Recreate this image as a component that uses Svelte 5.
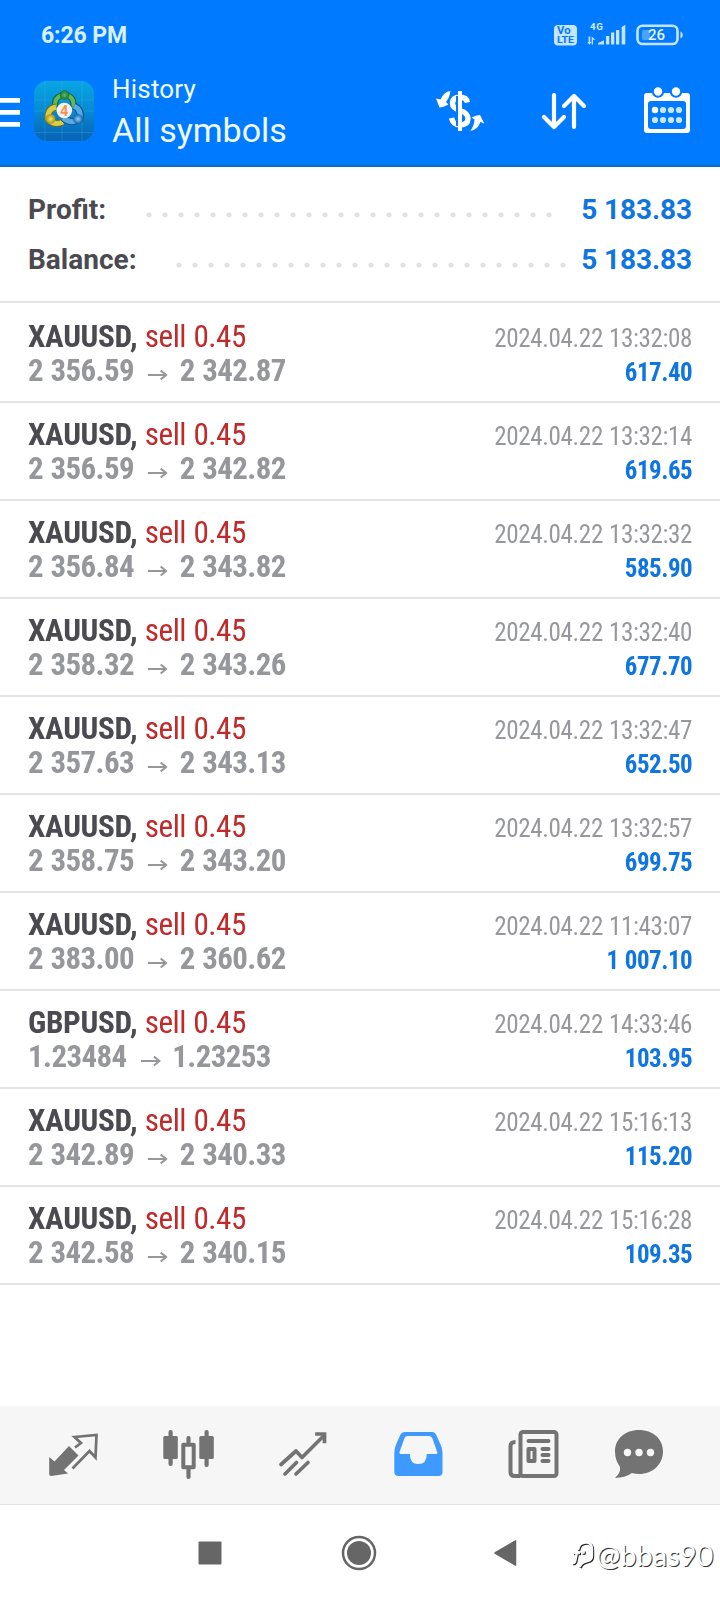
<script>
  const deals = [
    ['XAUUSD', '2 356.59', '2 342.87', '2024.04.22 13:32:08', '617.40'],
    ['XAUUSD', '2 356.59', '2 342.82', '2024.04.22 13:32:14', '619.65'],
    ['XAUUSD', '2 356.84', '2 343.82', '2024.04.22 13:32:32', '585.90'],
    ['XAUUSD', '2 358.32', '2 343.26', '2024.04.22 13:32:40', '677.70'],
    ['XAUUSD', '2 357.63', '2 343.13', '2024.04.22 13:32:47', '652.50'],
    ['XAUUSD', '2 358.75', '2 343.20', '2024.04.22 13:32:57', '699.75'],
    ['XAUUSD', '2 383.00', '2 360.62', '2024.04.22 11:43:07', '1 007.10'],
    ['GBPUSD', '1.23484', '1.23253', '2024.04.22 14:33:46', '103.95'],
    ['XAUUSD', '2 342.89', '2 340.33', '2024.04.22 15:16:13', '115.20'],
    ['XAUUSD', '2 342.58', '2 340.15', '2024.04.22 15:16:28', '109.35']
  ];
</script>

<div class="screen">
  <header>
    <div class="status">
      <span class="time">6:26 PM</span>
      <svg class="sys" width="136" height="30" viewBox="550 20 136 30">
        <rect x="554" y="25" width="23" height="20.500" rx="4" fill="#c4e4ff" />
        <text x="557" y="34" font-size="10" font-weight="700" fill="#007aff" textLength="13.500" lengthAdjust="spacingAndGlyphs">Vo</text>
        <text x="557" y="43.300" font-size="9.500" font-weight="700" fill="#007aff" textLength="17" lengthAdjust="spacingAndGlyphs">LTE</text>
        <text x="590" y="30" font-size="9.800" font-weight="700" fill="#d5edff" textLength="13">4G</text>
        <g fill="#c4e4ff">
          <path d="M588.600 36.500h1.600v5.500h1.400l-2.200 2.800-2.200-2.800h1.400zM593 44.500h-1.300v-8l3.800 3.200h-2.500z" />
          <path d="M598 44.500v-1.500l6-2.800v4.300zM606 36h3.300v8.500H606zM611 32.500h3.300v12H611zM616 30h3.300v14.500H616zM621.700 27l3.600-2.200v19.700H621.700z" />
          <path d="M680.500 31.500q2.300.5 2.300 3.500t-2.300 3.500z" />
        </g>
        <rect x="637.500" y="25.700" width="40" height="18.300" rx="5" fill="none" stroke="#c4e4ff" stroke-width="2.600" />
        <rect x="642" y="30" width="8" height="10" rx="1.500" fill="#4ba3ff" />
        <text x="648" y="40.200" font-size="15" font-weight="500" fill="#e6f5ff" textLength="17">26</text>
      </svg>
    </div>
    <div class="bar">
      <svg width="20" height="30" viewBox="0 97 20 30"><path d="M0 98h20v4.700H0zM0 110h20v4.700H0zM0 122h20v4.700H0z" fill="#fff" /></svg>
      <svg class="logo" width="62" height="62" viewBox="33 80 62 62">
        <defs>
          <linearGradient id="bg" x1="0" y1="0" x2="0" y2="1"><stop offset="0" stop-color="#08a6e4" /><stop offset=".5" stop-color="#0789d2" /><stop offset="1" stop-color="#0862b4" /></linearGradient>
          <radialGradient id="gr"><stop offset="0" stop-color="#57c05a" /><stop offset="1" stop-color="#16703a" /></radialGradient>
          <radialGradient id="ye"><stop offset="0" stop-color="#f6e46a" /><stop offset="1" stop-color="#a89414" /></radialGradient>
          <radialGradient id="bl"><stop offset="0" stop-color="#8fd2fa" /><stop offset="1" stop-color="#1467ab" /></radialGradient>
        </defs>
        <rect x="34" y="81" width="60" height="60" rx="13" fill="url(#bg)" />
        <path d="M34 100h60M34 111h60M34 132.500h60M45 81v60M62 81v60M82 81v60" stroke="#4fc0ee" stroke-opacity=".3" stroke-width=".8" />
        <g fill="none">
          <path d="M55 107q-1-11 9.500-12 10 1 9 12" stroke="#12632f" stroke-width="6" />
          <path d="M55 107q-1-11 9.500-12 10 1 9 12" stroke="#62b65c" stroke-width="4" />
          <path d="M56 107q-9 2-8 12 6 7 15 3" stroke="#6e6b12" stroke-width="7" />
          <path d="M56 107q-9 2-8 12 6 7 15 3" stroke="#d8cd48" stroke-width="5" />
          <path d="M74 106q8 4 6 13-8 6-17-1" stroke="#0c5291" stroke-width="7" />
          <path d="M74 106q8 4 6 13-8 6-17-1" stroke="#58a9df" stroke-width="5" />
        </g>
        <circle cx="64.500" cy="95" r="4.800" fill="url(#gr)" /><circle cx="50.500" cy="119" r="4.800" fill="url(#ye)" /><circle cx="78" cy="119" r="4.800" fill="url(#bl)" />
        <circle cx="64.300" cy="110.500" r="7.800" fill="#f6f4f0" />
        <text x="60" y="115.700" font-size="14.500" font-weight="700" fill="#f2945a">4</text>
      </svg>
      <div class="titles"><div class="sub">History</div><div class="main">All symbols</div></div>
      <svg class="actions" width="270" height="60" viewBox="430 80 270 60" fill="none" stroke="#fff">
        <path d="M467.500 102.500q-1-5.300-7.500-5.300-7.500 0-7.500 6.300 0 4.500 7.500 7 8 2.500 8 8 0 6.500-8 6.500-7 0-8.500-7" stroke-width="5.400" />
        <path d="M457 96v30" stroke="#007aff" stroke-width="2" />
        <path d="M460 91v40" stroke-width="4" />
        <path d="M450.300 91Q444 91.500 440.500 99.500L436 98.500 439.500 107.500Q444 107 448.500 104.500L446 102Q450 97 450.300 91zM470.300 131Q477.500 130 480.500 122L484.300 123.500 480 115Q476 115 471.500 117.500L474.500 119.500Q474 126 470.300 131z" fill="#fff" stroke="none" />
        <path d="M554 95v31M544 117l10 10 10-10M574 127V96M564 106l10-10 10 10" stroke-width="4.200" stroke-linecap="round" stroke-linejoin="round" />
        <rect x="644" y="93" width="46" height="40" rx="3" fill="#fff" stroke="none" />
        <rect x="648" y="101" width="38" height="28" rx="3" fill="#007aff" stroke="none" />
        <g fill="#fff" stroke="#007aff" stroke-width="2"><circle cx="658" cy="91.500" r="5.200" /><circle cx="676" cy="91.500" r="5.200" /></g>
        <g fill="#c9e6ff" stroke="none"><circle cx="655" cy="110" r="3.200" fill="#fff" /><circle cx="663" cy="110" r="3.100" /><circle cx="671" cy="110" r="3.100" /><circle cx="679" cy="110" r="3.100" /><circle cx="655" cy="120" r="3.100" /><circle cx="663" cy="120" r="3.100" /><circle cx="671" cy="120" r="3.100" /><circle cx="679" cy="120" r="3.100" /></g>
      </svg>
    </div>
  </header>

  <section class="summary">
    <div class="sum"><span class="label short">Profit:</span><i class="dots d26"></i><b>5 183.83</b></div>
    <div class="sum"><span class="label">Balance:</span><i class="dots d25"></i><b>5 183.83</b></div>
  </section>

  <main>
    {#each deals as [symbol, from, to, time, profit]}
      <article>
        <div class="line"><div class="sym"><strong>{symbol},</strong> <span class="sell">sell 0.45</span></div><time>{time}</time></div>
        <div class="line"><div class="price"><span>{from}</span><svg width="21" height="14" viewBox="0 0 21 14"><path d="M0 7h19M13.500 2.500 19 7l-5.500 4.500" fill="none" stroke="#96979b" stroke-width="2.200" /></svg><span>{to}</span></div><div class="profit">{profit}</div></div>
      </article>
    {/each}
  </main>

  <footer class="tabs">
    <svg viewBox="42 1425 64 60"><path d="M49.200 1457l5.300 4.500L69 1446l9.500 9.500-14.500 14.500 4 3.500-17 2.500q-1.800 0-1.800-1.800z" fill="#737373" /><path d="M75 1447.500l6-4.500-6.500-6 22-2-1 22.500-6-6.500-17 17.500" fill="none" stroke="#737373" stroke-width="2.700" /></svg>
    <svg viewBox="157 1425 64 60" fill="#737373"><rect x="168.500" y="1430" width="4.200" height="36" rx="2" /><rect x="163.300" y="1436" width="14.500" height="23" rx="1.500" /><rect x="204.500" y="1430" width="4.200" height="37" rx="2" /><rect x="199.300" y="1436" width="14.500" height="23" rx="1.500" /><rect x="186.400" y="1436" width="4.200" height="8" rx="2" /><rect x="186.400" y="1467" width="4.200" height="12" rx="2" /><rect x="183.300" y="1444.800" width="10.400" height="22.500" fill="#f6f6f6" stroke="#737373" stroke-width="4" stroke-linejoin="round" /></svg>
    <svg viewBox="272 1425 64 60" fill="none" stroke="#737373" stroke-width="3.700" stroke-linecap="round" stroke-linejoin="round"><path d="M281 1464.500l15-13.500 6 6.500 22-22M285 1474l11.500-11.500M296 1474l12-11.500" /><path d="M317 1434h7.500v7.500" stroke-linecap="square" stroke-linejoin="miter" stroke-width="3.700" /></svg>
    <svg viewBox="387 1425 64 60"><path fill-rule="evenodd" d="M404.500 1432h28q2.500 0 3.500 2.500l4.500 10q2 3.500 2 8.500v19q0 4-4 4h-40q-4.200 0-4.200-4v-19q0-5 2-9l4.200-9.500q1.200-2.500 4-2.500zm3 4q-2 0-3 2l-5 14q-.5 2 1 2h9.300q0 10 8.500 10t8.500-10h8.700q2.500 0 1.700-2l-4.700-13.500q-.8-2.500-3.500-2.500z" fill="#3e9aff" /></svg>
    <svg viewBox="502 1425 64 60" fill="none" stroke="#737373" stroke-width="4"><rect x="520.500" y="1432" width="36" height="44" rx="2.500" /><path d="M515.500 1442q-5 0-5 4v26q0 4 4 4h6" /><path d="M528.500 1441h20M542.500 1449h6M542.500 1455h6M542.500 1461h6" stroke-linecap="round" /><rect x="528.500" y="1449" width="6" height="12" stroke-linejoin="round" /></svg>
    <svg viewBox="607 1425 64 60"><path d="M639 1430c14 0 24 9 24 21.500S653 1474 639 1474q-4 0-7-.9-7 4.900-17 4.900 6-5.500 5-11-5-7-5-15.500c0-12.500 10-21.500 24-21.500z" fill="#737373" /><g fill="#f6f6f6"><circle cx="627.500" cy="1452.500" r="3.700" /><circle cx="639" cy="1452.500" r="3.700" /><circle cx="650.500" cy="1452.500" r="3.700" /></g></svg>
  </footer>
  <nav>
    <svg width="24" height="24" viewBox="0 0 24 24"><rect x=".5" y=".5" width="23" height="23" rx="1" fill="#666" /></svg>
    <svg width="36" height="36" viewBox="0 0 36 36"><circle cx="18" cy="18" r="16" fill="none" stroke="#666" stroke-width="2.500" /><circle cx="18" cy="18" r="12" fill="#666" /></svg>
    <svg width="24" height="28" viewBox="0 0 24 28"><path d="M22.500 2v24L2 14z" fill="#666" stroke="#666" stroke-width="1.500" stroke-linejoin="round" /></svg>
    <div class="mark">
      <svg width="25" height="30" viewBox="572 1544 25 30" fill="none" stroke="#fff" stroke-width="2.400"><path d="M573 1567q3 .5 3.500-3l1.700-9M574 1557h7M579 1554q1-7.500 8-7.500 6 0 6 7v6q0 5-4.500 5.500-6 1-8 6" /><circle cx="584" cy="1556" r=".8" /></svg>
      <span>@bbas90</span>
    </div>
  </nav>
</div>

<style>
  :global(body) { background: #fff; }
  .screen { width: 720px; height: 1600px; display: flex; flex-direction: column; font-family: Roboto, sans-serif; background: #fff; overflow: hidden; }
  svg { display: block; flex: none; }
  header { height: 165px; background: #007aff; border-bottom: 2px solid #1769bb; color: #effaff; }
  .status { height: 50px; padding: 20px 34px 0 41px; display: flex; justify-content: space-between; box-sizing: border-box; }
  .time { font-size: 23px; font-weight: 700; line-height: 32px; letter-spacing: -.1px; color: #d8f0ff; }
  .bar { height: 115px; display: flex; align-items: flex-start; }
  .bar > svg:first-child { margin-top: 47px; }
  .logo { margin: 30px 0 0 13px; }
  .titles { margin: 21px 0 0 17px; width: 190px; white-space: nowrap; }
  .sub { font-size: 26px; line-height: 36px; letter-spacing: .2px; }
  .main { font-size: 34px; line-height: 46px; }
  .actions { margin: 30px 0 0 128px; }
  .summary { height: 116px; padding: 18px 28px 0; border-bottom: 2px solid #e4e4e5; display: grid; grid-template-rows: 50px 50px; }
  .sum { display: flex; align-items: center; font-size: 28px; line-height: 50px; white-space: nowrap; }
  .label { width: 144.500px; font-weight: 700; color: #4a4a50; }
  .label.short { width: 114.500px; }
  .dots { height: 16px; margin-top: 9px; background: radial-gradient(circle at 6px 8px, #e2e2e2 2.200px, transparent 2.900px) 0 0 / 16px 16px; }
  .d26 { width: 416px; }
  .d25 { width: 400px; }
  .sum b { margin-left: auto; font-weight: 700; letter-spacing: -.08px; color: #0f75e2; }
  main { flex: 1; }
  article { height: 98px; box-sizing: border-box; padding: 14px 28px 0; border-bottom: 2px solid #e4e4e5; }
  article:first-child { height: 100px; padding-top: 16px; }
  .line { height: 34px; line-height: 34px; display: flex; justify-content: space-between; align-items: baseline; font-size: 32px; font-stretch: 75%; white-space: nowrap; }
  .sym { transform: scaleX(.975); transform-origin: left; letter-spacing: -.5px; word-spacing: .8px; }
  .sym strong { font-weight: 700; letter-spacing: -.35px; color: #4a4a50; }
  .sell { color: #c12a2a; }
  .price { display: flex; align-items: center; font-weight: 700; color: #96979b; transform: scaleX(.965); transform-origin: left; letter-spacing: -.62px; word-spacing: 1px; }
  .price svg { margin: 10px 12px 0 14.500px; }
  time { font-size: 26px; transform: scaleX(.965); transform-origin: right; letter-spacing: -.37px; word-spacing: .6px; margin-right: -.4px; color: #97989c; }
  .profit { font-size: 26px; font-weight: 700; transform: scaleX(.96); transform-origin: right; letter-spacing: -.5px; word-spacing: .8px; margin-right: -.5px; color: #0f75e2; }
  .tabs { height: 99px; box-sizing: border-box; background: #f6f6f6; border-bottom: 1px solid #dfdfdf; padding: 19px 0 0 42px; display: grid; grid-template-columns: 115px 115px 115px 115px 105px 64px; }
  .tabs svg { width: 64px; height: 60px; }
  nav { height: 95px; display: flex; align-items: center; padding-left: 198px; }
  nav > svg { margin-right: 119px; }
  nav > svg:nth-child(2) { margin-right: 116px; }
  nav > svg:nth-child(3) { margin-right: 54px; }
  .mark { display: flex; align-items: center; padding-top: 4px; white-space: nowrap; font: 400 29px Lato, sans-serif; color: #fff; }
  .mark svg { filter: drop-shadow(1px 1px 0 #222); }
  .mark span { text-shadow: 1px 1px 0 #333; }
</style>
